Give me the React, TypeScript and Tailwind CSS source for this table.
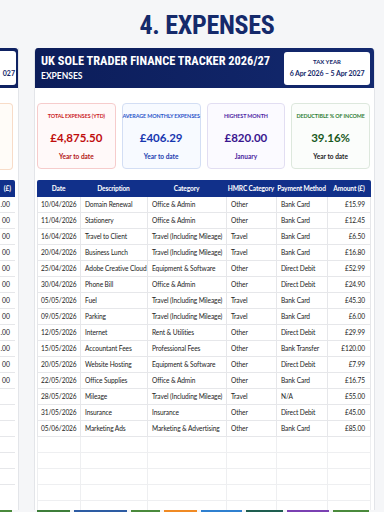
const rows = [
  ["10/04/2026", "Domain Renewal", "Office & Admin", "Other", "Bank Card", "£15.99"],
  ["11/04/2026", "Stationery", "Office & Admin", "Other", "Bank Card", "£12.45"],
  ["16/04/2026", "Travel to Client", "Travel (Including Mileage)", "Travel", "Bank Card", "£6.50"],
  ["20/04/2026", "Business Lunch", "Travel (Including Mileage)", "Travel", "Bank Card", "£16.80"],
  ["25/04/2026", "Adobe Creative Cloud", "Equipment & Software", "Other", "Direct Debit", "£52.99"],
  ["30/04/2026", "Phone Bill", "Office & Admin", "Other", "Direct Debit", "£24.90"],
  ["05/05/2026", "Fuel", "Travel (Including Mileage)", "Travel", "Bank Card", "£45.30"],
  ["09/05/2026", "Parking", "Travel (Including Mileage)", "Travel", "Bank Card", "£6.00"],
  ["12/05/2026", "Internet", "Rent & Utilities", "Other", "Direct Debit", "£29.99"],
  ["15/05/2026", "Accountant Fees", "Professional Fees", "Other", "Bank Transfer", "£120.00"],
  ["20/05/2026", "Website Hosting", "Equipment & Software", "Other", "Direct Debit", "£7.99"],
  ["22/05/2026", "Office Supplies", "Office & Admin", "Other", "Bank Card", "£16.75"],
  ["28/05/2026", "Mileage", "Travel (Including Mileage)", "Travel", "N/A", "£55.00"],
  ["31/05/2026", "Insurance", "Insurance", "Other", "Direct Debit", "£45.00"],
  ["05/06/2026", "Marketing Ads", "Marketing & Advertising", "Other", "Bank Card", "£85.00"],
];

const headers = ["Date", "Description", "Category", "HMRC Category", "Payment Method", "Amount (£)"];

// only the tail of the neighbouring sheet's amounts is on screen
const leftAmounts = [".00", "00", "00", "00", "00", "00", "00", "00", ".00", ".00", "00", "00", "", "", "", "", "", ""];

const cards = [
  { label: "TOTAL EXPENSES (YTD)", value: "£4,875.50", sub: "Year to date", box: "border-[#f6cccc] bg-[#fff9f9]", lc: "text-[#cc2222]", vc: "text-[#c00d0d]", sc: "text-[#b31414]" },
  { label: "AVERAGE MONTHLY EXPENSES", value: "£406.29", sub: "Year to date", box: "border-[#d3def4] bg-[#f7faff]", lc: "text-[#2a55c9]", vc: "text-[#1636b0]", sc: "text-[#1a3cb0]" },
  { label: "HIGHEST MONTH", value: "£820.00", sub: "January", box: "border-[#e2def2] bg-[#fbfaff]", lc: "text-[#4c24a3]", vc: "text-[#3a168f]", sc: "text-[#4a22a0]" },
  { label: "DEDUCTIBLE % OF INCOME", value: "39.16%", sub: "Year to date", box: "border-[#dde8dd] bg-[#fbfdfb]", lc: "text-[#2e7d32]", vc: "text-[#19591d]", sc: "text-[#222222]" },
];

const tabs = [
  "w-[33px] bg-[#3d7e3a]",
  "w-[53px] bg-[#2d5ca3]",
  "w-[29px] bg-[#4a8a3c]",
  "w-[33px] bg-[#f08a24]",
  "w-[41px] bg-[#2f80d0]",
  "w-[37px] bg-[#1e5e50]",
  "w-[42px] bg-[#7a40b2]",
  "w-[36px] bg-[#4a8a3c]",
];

const cols = "grid grid-cols-[43px_67px_79px_50px_51px_44px]";

function LeftPanel() {
  return (
    <div className="w-[19px] shrink-0 bg-white border-r border-[#e3e5e9] flex flex-col overflow-hidden">
      <div className="h-[40px] bg-[#0f2262] flex items-start pt-[3px] rounded-tr-[3px]">
        <div className="w-[16px] h-[34px] bg-white rounded-r-[3px] flex items-end justify-end pb-[8px] pr-[1px]">
          <span className="text-[7px] leading-none font-bold text-[#14286a]">027</span>
        </div>
      </div>
      <div className="mt-[15px] w-[13px] h-[67px] border border-l-0 border-[#f8dcc8] bg-[#fffcf8] rounded-r-[4px]" />
      <div className="mt-[10px] w-[15px] h-[17px] bg-[#11308a] rounded-tr-[2px] flex items-center justify-end pr-[4px]">
        <span className="text-[6.5px] font-bold text-white">(£)</span>
      </div>
      {leftAmounts.map((a, i) => (
        <div key={i} className="w-[15px] h-[16px] shrink-0 border-b border-[#e6e7ea] flex items-center justify-end pr-[5px]">
          <span className="text-[6.8px] text-[#222]">{a}</span>
        </div>
      ))}
    </div>
  );
}

export default function App() {
  return (
    <div className="w-[384px] h-[512px] overflow-hidden bg-[#f5f6f8] flex flex-col font-['Lato','Noto_Sans',sans-serif]">
      <div className="h-[48px] shrink-0 flex items-center justify-center pl-[30px] pt-[2px]">
        <h1 className="text-[26px] leading-none font-bold text-[#152a6b] font-['Liberation_Sans_Narrow','Roboto_Condensed',Roboto,sans-serif] tracking-[-0.3px]">
          4. EXPENSES
        </h1>
      </div>

      <div className="flex flex-1 min-h-0">
        <LeftPanel />
        <div className="ml-[15px] w-[341px] shrink-0 bg-white border-x border-[#e3e5e9] rounded-t-[4px] flex flex-col overflow-hidden">
          <div className="h-[40px] shrink-0 bg-gradient-to-r from-[#0c1d5a] to-[#13296f] flex items-center justify-between pl-[6px] pr-[4px]">
            <div className="flex flex-col text-white font-bold leading-none">
              <span className="text-[12.4px] whitespace-nowrap font-['Liberation_Sans_Narrow','Roboto_Condensed',Roboto,sans-serif]">
                UK SOLE TRADER FINANCE TRACKER 2026/27
              </span>
              <span className="text-[8.5px] mt-[5px]">EXPENSES</span>
            </div>
            <div className="w-[86px] h-[33px] shrink-0 bg-white rounded-[3px] flex flex-col items-center justify-center gap-[5px] text-[#14286a] font-bold leading-none">
              <span className="text-[6px]">TAX YEAR</span>
              <span className="text-[7px] whitespace-nowrap tracking-[-0.1px]">6 Apr 2026 – 5 Apr 2027</span>
            </div>
          </div>

          <div className="pl-[2px] pt-[15px] pr-[4px] flex flex-col">
            <div className="grid grid-cols-4 gap-[6px] w-[333px]">
              {cards.map((c) => (
                <div key={c.label} className={`h-[66px] border rounded-[4px] flex flex-col items-center font-bold leading-none ${c.box}`}>
                  <span className={`mt-[10px] text-[5.4px] whitespace-nowrap tracking-[-0.1px] ${c.lc}`}>{c.label}</span>
                  <span className={`mt-[13px] text-[11.5px] ${c.vc}`}>{c.value}</span>
                  <span className={`mt-[10px] text-[6.5px] ${c.sc}`}>{c.sub}</span>
                </div>
              ))}
            </div>

            <div className="mt-[11px] w-[334px]">
              <div className={`${cols} h-[17px] bg-[#11308a] rounded-t-[2px]`}>
                {headers.map((h) => (
                  <div key={h} className="flex items-center justify-center text-white text-[6.6px] font-bold whitespace-nowrap tracking-[-0.15px]">
                    {h}
                  </div>
                ))}
              </div>
              {rows.map((r, i) => (
                <div key={i} className={`${cols} h-[16px] border-b border-[#e6e7ea] text-[6.6px] tracking-[-0.1px] text-[#1c1c1c]`}>
                  {r.map((cell, j) => (
                    <div
                      key={j}
                      className={`flex items-center whitespace-nowrap overflow-hidden border-l border-[#e6e7ea] ${j === 5 ? "justify-end pr-[5px] border-r" : j === 0 ? "pl-[3px]" : "pl-[4px]"}`}
                    >
                      {cell}
                    </div>
                  ))}
                </div>
              ))}
              {[0, 1, 2, 3, 4].map((i) => (
                <div key={i} className={`${cols} h-[16px] border-b border-[#eeeff1]`}>
                  {headers.map((h, j) => (
                    <div key={h} className={`border-l border-[#eeeff1] ${j === 5 ? "border-r" : ""}`} />
                  ))}
                </div>
              ))}
            </div>
          </div>
        </div>
      </div>

      <div className="h-[2px] shrink-0 flex">
        <div className="w-[12px] bg-[#4a8a3c]" />
        <div className="ml-[25px] flex gap-[4px]">
          {tabs.map((t, i) => (
            <div key={i} className={t} />
          ))}
        </div>
      </div>
    </div>
  );
}
